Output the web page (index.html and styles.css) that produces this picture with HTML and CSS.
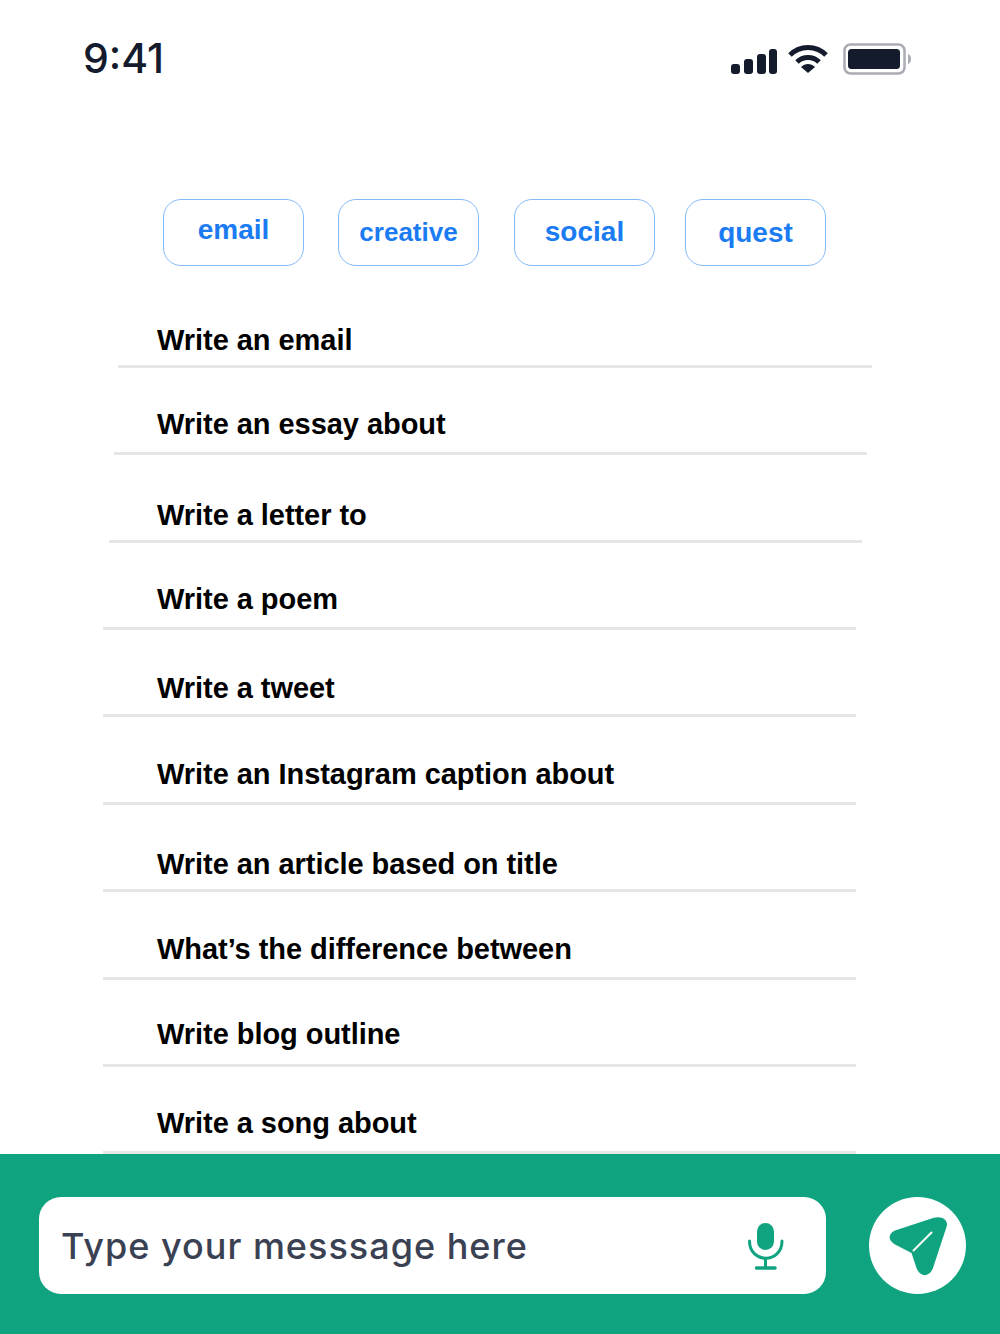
FILE: index.html
```html
<!DOCTYPE html>
<html>
<head>
  <meta charset="utf-8">
  <meta name="viewport" content="width=device-width, initial-scale=1">
  <title>Prompts</title>
  <link rel="stylesheet" href="styles.css">
</head>
<body>
  <div class="page">
    <!-- status bar -->
    <div class="statusbar">
      <span class="time">9:41</span>
      <div class="status-icons">
        <svg class="signal" width="46" height="25" viewBox="0 0 46 25">
          <rect x="0" y="15" width="9" height="10" rx="3"/>
          <rect x="13" y="10" width="9" height="15" rx="3"/>
          <rect x="26" y="5" width="9" height="20" rx="3"/>
          <rect x="38" y="0" width="8" height="25" rx="3"/>
        </svg>
        <svg class="wifi" width="40" height="30" viewBox="0 0 40 30">
          <path d="M2 11 C12 1 28 1 38 11" fill="none" stroke="#131b2c" stroke-width="5"/>
          <path d="M9 18 C15 12 25 12 31 18" fill="none" stroke="#131b2c" stroke-width="5"/>
          <path d="M13 23 C17 19 23 19 27 23 L20 29 Z" fill="#131b2c"/>
        </svg>
        <svg class="battery" width="70" height="34" viewBox="0 0 70 34">
          <rect x="1.5" y="1.5" width="60" height="29" rx="6" fill="none" stroke="#a9acb3" stroke-width="2.5"/>
          <rect x="5" y="6" width="52" height="20" rx="3.5" fill="#131b2c"/>
          <path d="M65 11 C69 12 69 20 65 21 Z" fill="#a9acb3"/>
        </svg>
      </div>
    </div>

    <!-- category tabs -->
    <div class="tabs">
      <a class="tab tab-up" href="#">email</a>
      <a class="tab tab-small" href="#">creative</a>
      <a class="tab" href="#">social</a>
      <a class="tab tab-down" href="#">quest</a>
    </div>

    <!-- prompt list -->
    <ul class="prompts">
      <li class="prompt shift-a gap-s">Write an email</li>
      <li class="prompt shift-b gap-m">Write an essay about</li>
      <li class="prompt shift-c gap-s">Write a letter to</li>
      <li class="prompt gap-m">Write a poem</li>
      <li class="prompt gap-t">Write a tweet</li>
      <li class="prompt gap-m">Write an Instagram caption about</li>
      <li class="prompt gap-s">Write an article based on title</li>
      <li class="prompt gap-m">What’s the difference between</li>
      <li class="prompt gap-xl">Write blog outline</li>
      <li class="prompt gap-m">Write a song about</li>
    </ul>

    <!-- message bar -->
    <div class="composer">
      <div class="message-box">
        <span class="placeholder">Type your messsage here</span>
        <svg class="mic" width="40" height="48" viewBox="0 0 40 48">
          <rect x="11" y="1" width="17" height="27" rx="8.5" fill="#10a37f"/>
          <path d="M3.5 19 C3.5 42 36 42 36 19" fill="none" stroke="#10a37f" stroke-width="3" stroke-linecap="round"/>
          <path d="M19.5 36 V45" stroke="#10a37f" stroke-width="3"/>
          <path d="M10.5 46 H29" stroke="#10a37f" stroke-width="3.5" stroke-linecap="round"/>
        </svg>
      </div>
      <button class="send">
        <svg width="60" height="62" viewBox="0 0 60 62">
          <path d="M10 31 C0 27 -1 19 7 15.5 L45.8 2.8 C54 0.5 61 5 58.5 12 L45 53 C41.5 62.5 32 62.5 28.5 53 L23.5 38 Z" fill="#10a37f"/>
          <path d="M25.5 35.5 L43.5 17.5" stroke="#fff" stroke-width="2" stroke-linecap="round"/>
        </svg>
      </button>
    </div>
  </div>
</body>
</html>
```

FILE: styles.css
```css
* {box-sizing: border-box}

html, body {
  margin: 0;
  background: #fff;
}

.page {
  width: 1000px;
  height: 1334px;
  display: flex;
  flex-direction: column;
  overflow: hidden;
  font-family: "Liberation Sans", Arial, sans-serif;
}

/* Status bar */
.statusbar {
  height: 199px;
  padding: 36px 87px 0 83px;
  display: flex;
  justify-content: space-between;
  align-items: flex-start;
}

.time {
  font-family: Inter, sans-serif;
  font-size: 41px;
  font-weight: 500;
  line-height: 44px;
  color: #131b2c;
}

.status-icons {
  display: flex;
  align-items: flex-start;
  padding-top: 7px;
}

.signal {
  fill: #131b2c;
  margin: 6px 11px 0 0;
}

.wifi {
  margin: 1px 15px 0 0;
}

/* Tabs */
.tabs {
  height: 67px;
  padding-left: 163px;
  display: flex;
}

.tab {
  width: 141px;
  height: 67px;
  margin-right: 35px;
  border: 1px solid #84bafa;
  border-radius: 18px;
  display: flex;
  justify-content: center;
  align-items: center;
  font-size: 28px;
  font-weight: bold;
  color: #1a7bf2;
  text-decoration: none;
}

.tab:first-child {
  margin-right: 34px;
}

.tab:nth-child(3) {
  margin-right: 30px;
}

.tab-small {
  font-size: 26px;
}

.tab-up {
  padding-bottom: 5px;
}

.tab-down {
  padding-top: 2px;
}

/* Prompt list */
.prompts {
  list-style: none;
  margin: 0;
  padding: 15px 0 0 0;
  flex: 1;
  display: flex;
  flex-direction: column;
}

.prompt {
  height: 87.4px;
  margin-left: 103px;
  width: 753px;
  padding-left: 54px;
  border-bottom: 3px solid #e6e6e6;
  display: flex;
  align-items: flex-end;
  font-size: 29px;
  font-weight: bold;
  letter-spacing: -0.05px;
  line-height: 34px;
  color: #000;
}

.shift-a {
  margin-left: 118px;
  width: 754px;
  padding-left: 39px;
}

.shift-b {
  margin-left: 114px;
  padding-left: 43px;
}

.shift-c {
  margin-left: 109px;
  padding-left: 48px;
}

.gap-s {
  padding-bottom: 8px;
}

.gap-t {
  padding-bottom: 9px;
}

.gap-m {
  padding-bottom: 11px;
}

.gap-xl {
  padding-bottom: 13px;
}

/* Message bar */
.composer {
  height: 180px;
  background: #10a37f;
  padding: 43px 34px 0 39px;
  display: flex;
  justify-content: space-between;
  align-items: flex-start;
}

.message-box {
  width: 787px;
  height: 97px;
  background: #fff;
  border-radius: 22px;
  padding: 0 40px 0 22px;
  display: flex;
  justify-content: space-between;
  align-items: center;
}

.placeholder {
  font-family: Inter, sans-serif;
  font-size: 36px;
  font-weight: 500;
  letter-spacing: 1px;
  color: #3a4152;
}

.send {
  width: 97px;
  height: 97px;
  padding: 0;
  border: none;
  border-radius: 50%;
  background: #fff;
  display: flex;
  justify-content: center;
  align-items: center;
}
```
